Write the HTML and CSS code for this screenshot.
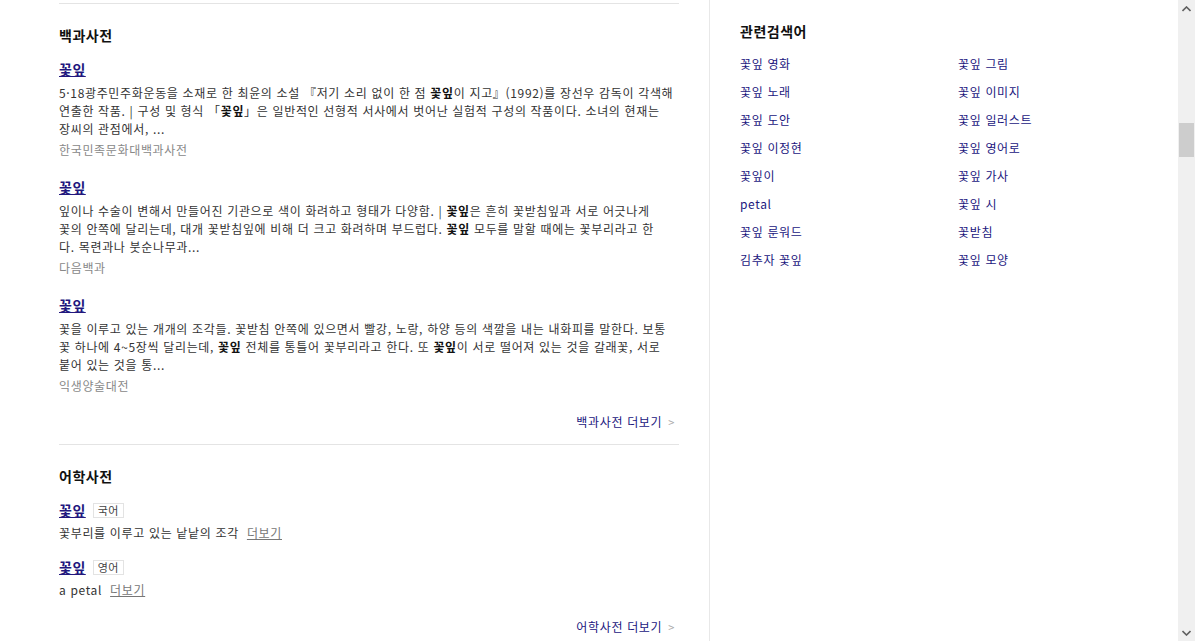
FILE: index.html
```html
<!DOCTYPE html>
<html lang="ko">
<head>
    <meta charset="UTF-8">
    <meta name="viewport" content="width=device-width, initial-scale=1.0">
    <title>꽃잎 - 검색결과</title>
    <link rel="stylesheet" href="styles.css">
</head>
<body>

    <div class="page">
        <div class="main">
            <div class="section first">
                <h2 class="sec-title">백과사전</h2>

                <div class="item">
                    <a class="item-title" href="#">꽃잎</a>
                    <p class="desc">5·18광주민주화운동을 소재로 한 최윤의 소설 『저기 소리 없이 한 점 <b>꽃잎</b>이 지고』(1992)를 장선우 감독이 각색해<br>연출한 작품. | 구성 및 형식 「<b>꽃잎</b>」은 일반적인 선형적 서사에서 벗어난 실험적 구성의 작품이다. 소녀의 현재는<br>장씨의 관점에서, ...</p>
                    <div class="source">한국민족문화대백과사전</div>
                </div>

                <div class="item">
                    <a class="item-title" href="#">꽃잎</a>
                    <p class="desc">잎이나 수술이 변해서 만들어진 기관으로 색이 화려하고 형태가 다양함. | <b>꽃잎</b>은 흔히 꽃받침잎과 서로 어긋나게<br>꽃의 안쪽에 달리는데, 대개 꽃받침잎에 비해 더 크고 화려하며 부드럽다. <b>꽃잎</b> 모두를 말할 때에는 꽃부리라고 한<br>다. 목련과나 붓순나무과...</p>
                    <div class="source">다음백과</div>
                </div>

                <div class="item">
                    <a class="item-title" href="#">꽃잎</a>
                    <p class="desc">꽃을 이루고 있는 개개의 조각들. 꽃받침 안쪽에 있으면서 빨강, 노랑, 하양 등의 색깔을 내는 내화피를 말한다. 보통<br>꽃 하나에 4~5장씩 달리는데, <b>꽃잎</b> 전체를 통틀어 꽃부리라고 한다. 또 <b>꽃잎</b>이 서로 떨어져 있는 것을 갈래꽃, 서로<br>붙어 있는 것을 통...</p>
                    <div class="source">익생양술대전</div>
                </div>

                <div class="more more-enc"><a href="#">백과사전 더보기</a><span class="arrow">&gt;</span></div>
            </div>

            <div class="section">
                <h2 class="sec-title">어학사전</h2>

                <div class="word">
                    <div class="word-head"><a class="item-title" href="#">꽃잎</a><span class="badge">국어</span></div>
                    <p class="mean">꽃부리를 이루고 있는 낱낱의 조각<a class="detail" href="#">더보기</a></p>
                </div>

                <div class="word">
                    <div class="word-head"><a class="item-title" href="#">꽃잎</a><span class="badge">영어</span></div>
                    <p class="mean">a petal<a class="detail" href="#">더보기</a></p>
                </div>

                <div class="more more-dic"><a href="#">어학사전 더보기</a><span class="arrow">&gt;</span></div>
            </div>
        </div>

        <div class="aside">
            <h2 class="sec-title">관련검색어</h2>
            <ul class="related">
                <li><a href="#">꽃잎 영화</a></li>
                <li><a href="#">꽃잎 그림</a></li>
                <li><a href="#">꽃잎 노래</a></li>
                <li><a href="#">꽃잎 이미지</a></li>
                <li><a href="#">꽃잎 도안</a></li>
                <li><a href="#">꽃잎 일러스트</a></li>
                <li><a href="#">꽃잎 이정현</a></li>
                <li><a href="#">꽃잎 영어로</a></li>
                <li><a href="#">꽃잎이</a></li>
                <li><a href="#">꽃잎 가사</a></li>
                <li><a href="#">petal</a></li>
                <li><a href="#">꽃잎 시</a></li>
                <li><a href="#">꽃잎 룬워드</a></li>
                <li><a href="#">꽃받침</a></li>
                <li><a href="#">김추자 꽃잎</a></li>
                <li><a href="#">꽃잎 모양</a></li>
            </ul>
        </div>

        <div class="scrollbar">
            <div class="sb-btn">
                <svg width="9" height="6" viewBox="0 0 9 6"><path d="M0.5 5 L4.5 1 L8.5 5" fill="none" stroke="#606060" stroke-width="1.6"/></svg>
            </div>
            <div class="sb-track">
                <div class="sb-thumb"></div>
            </div>
            <div class="sb-btn">
                <svg width="9" height="6" viewBox="0 0 9 6"><path d="M0.5 1 L4.5 5 L8.5 1" fill="none" stroke="#606060" stroke-width="1.6"/></svg>
            </div>
        </div>
    </div>

</body>
</html>
```

FILE: styles.css
```css
* { box-sizing: border-box; }
body { margin: 0; font-family: "Noto Sans CJK KR", "Liberation Sans", sans-serif; font-size: 12px; letter-spacing: 0.66px; color: #333; background: #fff; }
a { text-decoration: none; }
p { margin: 0; }
ul { margin: 0; padding: 0; list-style: none; }

.page { display: flex; height: 641px; overflow: hidden; }

/* 본문 */
.main { width: 679px; padding-left: 59px; flex-shrink: 0; }
.section { border-top: 1px solid #e4e4e4; padding-top: 21px; }
.section.first { margin-top: 3px; padding-bottom: 13px; }
.sec-title { margin: 0; font-size: 14px; font-weight: bold; line-height: 20px; letter-spacing: 0.5px; color: #111; }

.item { margin-top: 18px; }
.section .item:first-of-type { margin-top: 14px; }
.item-title { display: inline-block; font-size: 14px; font-weight: bold; line-height: 20px; letter-spacing: 0.5px; color: #22177e; text-decoration: underline; }
.desc { margin-top: 5px; line-height: 18px; color: #333; }
.desc b { color: #111; }
.source { margin-top: 3px; line-height: 18px; color: #888; }

.more { text-align: right; line-height: 18px; padding-right: 4px; }
.more a { color: #22177e; font-size: 12px; }
.more .arrow { color: #aaa; font-size: 11px; margin-left: 6px; }
.more-enc { margin-top: 18px; }
.more-dic { margin-top: 19px; }

.word { margin-top: 15px; }
.section .word:first-of-type { margin-top: 14px; }
.word-head { display: flex; align-items: center; height: 20px; }
.badge { margin-left: 7px; padding: 0 4px; border: 1px solid #e3e3e3; font-size: 11px; line-height: 13px; letter-spacing: 0.3px; color: #444; }
.mean { margin-top: 4px; line-height: 18px; color: #333; }
.detail { margin-left: 8px; color: #777; text-decoration: underline; }

/* 관련검색어 */
.aside { flex: 1; margin-left: 30px; border-left: 1px solid #e8e8e8; padding: 21px 0 0 30px; }
.related { display: grid; grid-template-columns: 218px 218px; row-gap: 10px; margin-top: 14px; }
.related li { line-height: 18px; }
.related a { color: #22177e; }

/* 스크롤바 */
.scrollbar { width: 17px; flex-shrink: 0; background: #f0f0f0; display: flex; flex-direction: column; }
.sb-btn { height: 17px; display: flex; align-items: center; justify-content: center; }
.sb-track { flex: 1; padding-top: 106px; }
.sb-thumb { margin: 0 1px; height: 34px; background: #cdcdcd; }
```
